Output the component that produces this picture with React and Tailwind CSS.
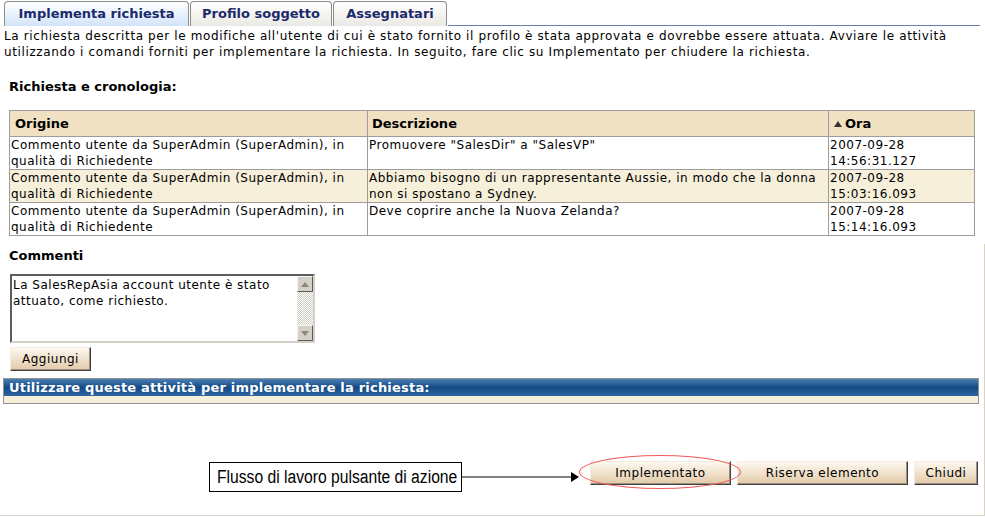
import React from "react"

const font = { fontFamily: '"DejaVu Sans", Verdana, sans-serif' }

const tabs = [
  { label: "Implementa richiesta", w: "w-[185px]", active: true },
  { label: "Profilo soggetto", w: "w-[142px]" },
  { label: "Assegnatari", w: "w-[114px]" },
]

const rows = [
  {
    origin: ["Commento utente da SuperAdmin (SuperAdmin), in", "qualità di Richiedente"],
    desc: ['Promuovere "SalesDir" a "SalesVP"'],
    time: ["2007-09-28", "14:56:31.127"],
  },
  {
    origin: ["Commento utente da SuperAdmin (SuperAdmin), in", "qualità di Richiedente"],
    desc: ["Abbiamo bisogno di un rappresentante Aussie, in modo che la donna", "non si spostano a Sydney."],
    time: ["2007-09-28", "15:03:16.093"],
    alt: true,
  },
  {
    origin: ["Commento utente da SuperAdmin (SuperAdmin), in", "qualità di Richiedente"],
    desc: ["Deve coprire anche la Nuova Zelanda?"],
    time: ["2007-09-28", "15:14:16.093"],
  },
]

const Btn = ({ children, className = "" }) => (
  <div
    className={`h-[24px] flex items-center justify-center text-[12px] tracking-[0.5px] border border-t-[#f4ecdf] border-l-[#f4ecdf] border-r-[#404040] border-b-[#404040] bg-gradient-to-b from-[#fdf8ef] via-[#f0e2cc] to-[#e2c9a8] shadow-[inset_-1px_-1px_0_#9a8f80] ${className}`}
  >
    {children}
  </div>
)

const Lines = ({ items }) => items.map((l, i) => <div key={i} className="whitespace-nowrap">{l}</div>)

export default function App() {
  return (
    <div className="w-[985px] h-[517px] bg-white text-black overflow-hidden" style={font}>
      {/* Tabs */}
      <div className="flex items-end h-[26px] pl-[4px] pr-[5px]">
        {tabs.map((t) => (
          <div
            key={t.label}
            className={`${t.w} h-[25px] mr-[1px] rounded-t-[4px] border border-b-0 border-[#8c8c8c] flex items-center justify-center text-[13px] font-bold text-[#1b2a6b] ${
              t.active
                ? "bg-gradient-to-b from-[#ffffff] to-[#d2e4f8]"
                : "bg-gradient-to-b from-[#ffffff] to-[#ebe9e3]"
            }`}
          >
            {t.label}
          </div>
        ))}
        <div className="flex-1 border-b border-[#6a7dab]" />
      </div>

      {/* Intro */}
      <p className="px-[4px] pt-[2px] text-[12px] leading-[16px] tracking-[0.62px] whitespace-nowrap">
        La richiesta descritta per le modifiche all'utente di cui è stato fornito il profilo è stata approvata e dovrebbe essere attuata. Avviare le attività
        <br />
        utilizzando i comandi forniti per implementare la richiesta. In seguito, fare clic su Implementato per chiudere la richiesta.
      </p>

      <div className="pl-[9px] mt-[19px] text-[13px] leading-[16px] font-bold">Richiesta e cronologia:</div>

      {/* History table */}
      <table className="ml-[9px] mt-[15px] w-[966px] border-collapse text-[12px] leading-[16px] tracking-[0.5px]">
        <thead>
          <tr className="bg-[#f1e1c3] h-[26px] text-[13px] font-bold text-left">
            <th className="w-[358px] border border-[#9c9c9c] px-[5px] font-bold tracking-normal">Origine</th>
            <th className="w-[461px] border border-[#9c9c9c] px-[4px] font-bold tracking-normal">Descrizione</th>
            <th className="border border-[#9c9c9c] px-[4px] font-bold tracking-normal">
              <span className="inline-flex items-center gap-[2px]">
                <svg width="10" height="8" viewBox="0 0 10 8">
                  <polygon points="5,1 9,7 1,7" fill="#333" />
                </svg>
                Ora
              </span>
            </th>
          </tr>
        </thead>
        <tbody>
          {rows.map((r, i) => (
            <tr key={i} className={`align-top h-[33px] ${r.alt ? "bg-[#f6efda]" : "bg-white"}`}>
              <td className="border border-[#9c9c9c] pl-[1px] p-0">
                <Lines items={r.origin} />
              </td>
              <td className="border border-[#9c9c9c] pl-[1px] p-0">
                <Lines items={r.desc} />
              </td>
              <td className="border border-[#9c9c9c] pl-[1px] p-0">
                <Lines items={r.time} />
              </td>
            </tr>
          ))}
        </tbody>
      </table>

      {/* Lower section */}
      <div className="mt-[8px] h-[272px] border-r border-b border-[#d6d3cb] pt-[4px]">
        <div className="pl-[9px] text-[13px] leading-[16px] font-bold">Commenti</div>

        <div className="ml-[10px] mt-[10px] w-[305px] h-[69px] flex border-2 border-t-[#5c5c5c] border-l-[#5c5c5c] border-r-[#d4d0c8] border-b-[#d4d0c8] bg-white">
          <div className="flex-1 pl-[1px] pt-[1px] text-[12px] leading-[16px] tracking-[0.5px] whitespace-nowrap">
            La SalesRepAsia account utente è stato
            <br />
            attuato, come richiesto.
          </div>
          <div className="w-[16px] flex flex-col bg-[repeating-conic-gradient(#ffffff_0%_25%,#cfccc4_0%_50%)] bg-[length:2px_2px]">
            <div className="h-[16px] flex items-center justify-center bg-[#d4d0c8] border border-t-[#f5f4f0] border-l-[#f5f4f0] border-r-[#5c5c5c] border-b-[#5c5c5c]">
              <svg width="8" height="5" viewBox="0 0 8 5">
                <polygon points="4,0 8,5 0,5" fill="#8a877f" />
              </svg>
            </div>
            <div className="flex-1" />
            <div className="h-[16px] flex items-center justify-center bg-[#d4d0c8] border border-t-[#f5f4f0] border-l-[#f5f4f0] border-r-[#5c5c5c] border-b-[#5c5c5c]">
              <svg width="8" height="5" viewBox="0 0 8 5">
                <polygon points="0,0 8,0 4,5" fill="#8a877f" />
              </svg>
            </div>
          </div>
        </div>

        <Btn className="ml-[10px] mt-[4px] w-[81px]">Aggiungi</Btn>

        {/* Tasks bar */}
        <div className="ml-[3px] mt-[7px] w-[976px] border border-[#929292]">
          <div className="h-[17px] flex items-center px-[5px] text-[13px] font-bold tracking-[0.2px] text-white bg-gradient-to-b from-[#4a7fb5] via-[#144a85] to-[#2b67a3]">
            Utilizzare queste attività per implementare la richiesta:
          </div>
          <div className="h-[7px] bg-[#f6f0da]" />
        </div>

        {/* Workflow buttons */}
        <div className="mt-[57px] flex items-start pl-[209px]">
          <div
            className="mt-[1px] w-[253px] h-[30px] border border-black flex items-center pl-[7px] text-black overflow-hidden"
            style={{ fontFamily: '"Liberation Sans", Arial, sans-serif' }}
          >
            <span className="inline-block text-[18px] leading-none whitespace-nowrap origin-left scale-x-[0.87]">
              Flusso di lavoro pulsante di azione
            </span>
          </div>
          <svg width="118" height="31" viewBox="0 0 118 31" className="shrink-0">
            <line x1="0" y1="16" x2="110" y2="16" stroke="#000" strokeWidth="1" />
            <polygon points="109,11 117,16 109,21" fill="#000" />
          </svg>
          <div className="relative ml-[10px]">
            <Btn className="w-[141px]">Implementato</Btn>
            <div className="absolute left-[-11px] top-[-6px] w-[162px] h-[34px] rounded-[50%] border-[1.5px] border-[#f05a5a] pointer-events-none" />
          </div>
          <Btn className="ml-[6px] w-[171px]">Riserva elemento</Btn>
          <Btn className="ml-[6px] w-[64px]">Chiudi</Btn>
        </div>
      </div>
    </div>
  )
}
